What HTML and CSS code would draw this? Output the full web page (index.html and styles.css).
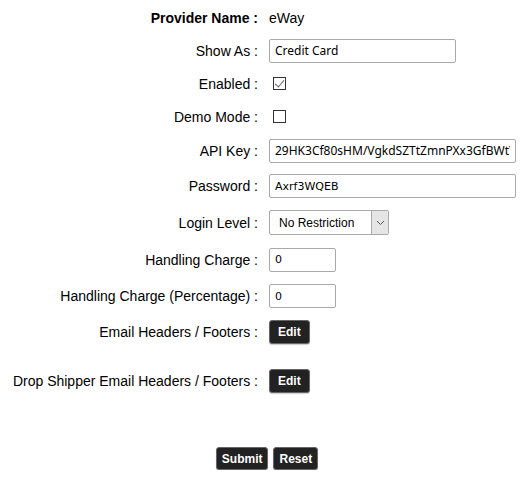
FILE: index.html
```html
<!DOCTYPE html>
<html lang="en">
<head>
  <meta charset="UTF-8">
  <title>Payment Provider</title>
  <link rel="stylesheet" href="styles.css">
</head>
<body>
  <form class="provider-form" onsubmit="return false">
    <div class="row row-name">
      <label class="label bold">Provider Name :</label>
      <div class="value">eWay</div>
    </div>
    <div class="row row-a">
      <label class="label" for="show-as">Show As :</label>
      <div class="value"><input type="text" id="show-as" class="text wide-1" value="Credit Card"></div>
    </div>
    <div class="row row-a">
      <label class="label" for="enabled">Enabled :</label>
      <div class="value"><input type="checkbox" id="enabled" class="check" checked></div>
    </div>
    <div class="row row-a">
      <label class="label" for="demo">Demo Mode :</label>
      <div class="value"><input type="checkbox" id="demo" class="check"></div>
    </div>
    <div class="row row-b">
      <label class="label" for="api-key">API Key :</label>
      <div class="value"><input type="text" id="api-key" class="text wide-2" value="29HK3Cf80sHM/VgkdSZTtZmnPXx3GfBWtY"></div>
    </div>
    <div class="row row-c">
      <label class="label" for="password">Password :</label>
      <div class="value"><input type="text" id="password" class="text wide-2 plain" value="Axrf3WQEB"></div>
    </div>
    <div class="row row-d">
      <label class="label" for="login-level">Login Level :</label>
      <div class="value">
        <span class="select-wrap">
          <select id="login-level" class="select">
            <option>No Restriction</option>
            <option>Logged In</option>
          </select>
          <span class="select-arrow">
            <svg width="9" height="6" viewBox="0 0 9 6"><path d="M1 1 L4.5 4.5 L8 1" fill="none" stroke="#555" stroke-width="1"/></svg>
          </span>
        </span>
      </div>
    </div>
    <div class="row row-d">
      <label class="label" for="charge">Handling Charge :</label>
      <div class="value"><input type="text" id="charge" class="text small plain" value="0"></div>
    </div>
    <div class="row row-c">
      <label class="label" for="charge-pct">Handling Charge (Percentage) :</label>
      <div class="value"><input type="text" id="charge-pct" class="text small plain" value="0"></div>
    </div>
    <div class="row row-c">
      <label class="label">Email Headers / Footers :</label>
      <div class="value"><button type="button" class="btn">Edit</button></div>
    </div>
    <div class="row row-e">
      <label class="label">Drop Shipper Email Headers / Footers :</label>
      <div class="value"><button type="button" class="btn">Edit</button></div>
    </div>
    <div class="actions">
      <button type="submit" class="btn">Submit</button>
      <button type="reset" class="btn">Reset</button>
    </div>
  </form>
</body>
</html>
```

FILE: styles.css
```css
body {
  margin: 0;
  padding: 0;
  background: #fff;
  color: #000;
  font-family: "Liberation Sans", Arial, sans-serif;
  font-size: 14px;
}
.provider-form {
  width: 532px;
  padding-top: 2px;
}
.row {
  display: grid;
  grid-template-columns: 258px auto;
  column-gap: 11px;
  align-items: center;
  height: 36px;
}
.row-name {
  height: 32px;
}
.row-a {
  height: 33px;
}
.row-b {
  height: 35px;
}
.row-d {
  height: 37px;
}
.row-e {
  height: 62px;
}
.label {
  text-align: right;
  white-space: nowrap;
}
.bold {
  font-weight: bold;
}
.value {
  display: flex;
  align-items: center;
}
.text {
  box-sizing: border-box;
  height: 24px;
  padding: 0 5px;
  border: 1px solid #a9a9a9;
  border-radius: 2px;
  font-family: "Noto Sans", sans-serif;
  font-size: 12px;
  color: #000;
  outline: none;
}
.plain {
  font-family: "DejaVu Sans", sans-serif;
  font-size: 11px;
}
.wide-1 {
  width: 187px;
}
.wide-2 {
  width: 247px;
}
.small {
  width: 67px;
}
.check {
  -webkit-appearance: none;
  appearance: none;
  position: relative;
  width: 13px;
  height: 13px;
  margin: 0 0 0 4px;
  border: 1px solid #333;
  border-radius: 0;
  background: #fff;
}
.check:checked::after {
  content: "";
  position: absolute;
  left: 3px;
  top: 0px;
  width: 4px;
  height: 8px;
  border-right: 1px solid #666;
  border-bottom: 1px solid #666;
  transform: rotate(40deg);
}
.select-wrap {
  position: relative;
  display: inline-block;
}
.select {
  -webkit-appearance: none;
  appearance: none;
  box-sizing: border-box;
  width: 120px;
  height: 25px;
  padding: 0 0 0 9px;
  border: 1px solid #a9a9a9;
  border-radius: 2px;
  background: #fff;
  font-family: "Liberation Sans", Arial, sans-serif;
  font-size: 12px;
  color: #000;
}
.select-arrow {
  position: absolute;
  top: 1px;
  right: 1px;
  width: 16px;
  height: 23px;
  border-left: 1px solid #a9a9a9;
  background: #e5e5e5;
  display: flex;
  align-items: center;
  justify-content: center;
}
.btn {
  box-sizing: border-box;
  height: 24px;
  padding: 0 8px;
  border: 1px solid #666;
  border-radius: 3px;
  background: #222;
  color: #fff;
  font-family: "Liberation Sans", Arial, sans-serif;
  font-size: 12px;
  font-weight: bold;
  cursor: pointer;
  box-shadow: 0 1px 1px rgba(0, 0, 0, 0.2);
}
.actions {
  display: flex;
  justify-content: center;
  gap: 5px;
  padding-top: 35px;
  padding-left: 2px;
}
.actions .btn {
  height: 23px;
  padding: 0 5px;
}
```
